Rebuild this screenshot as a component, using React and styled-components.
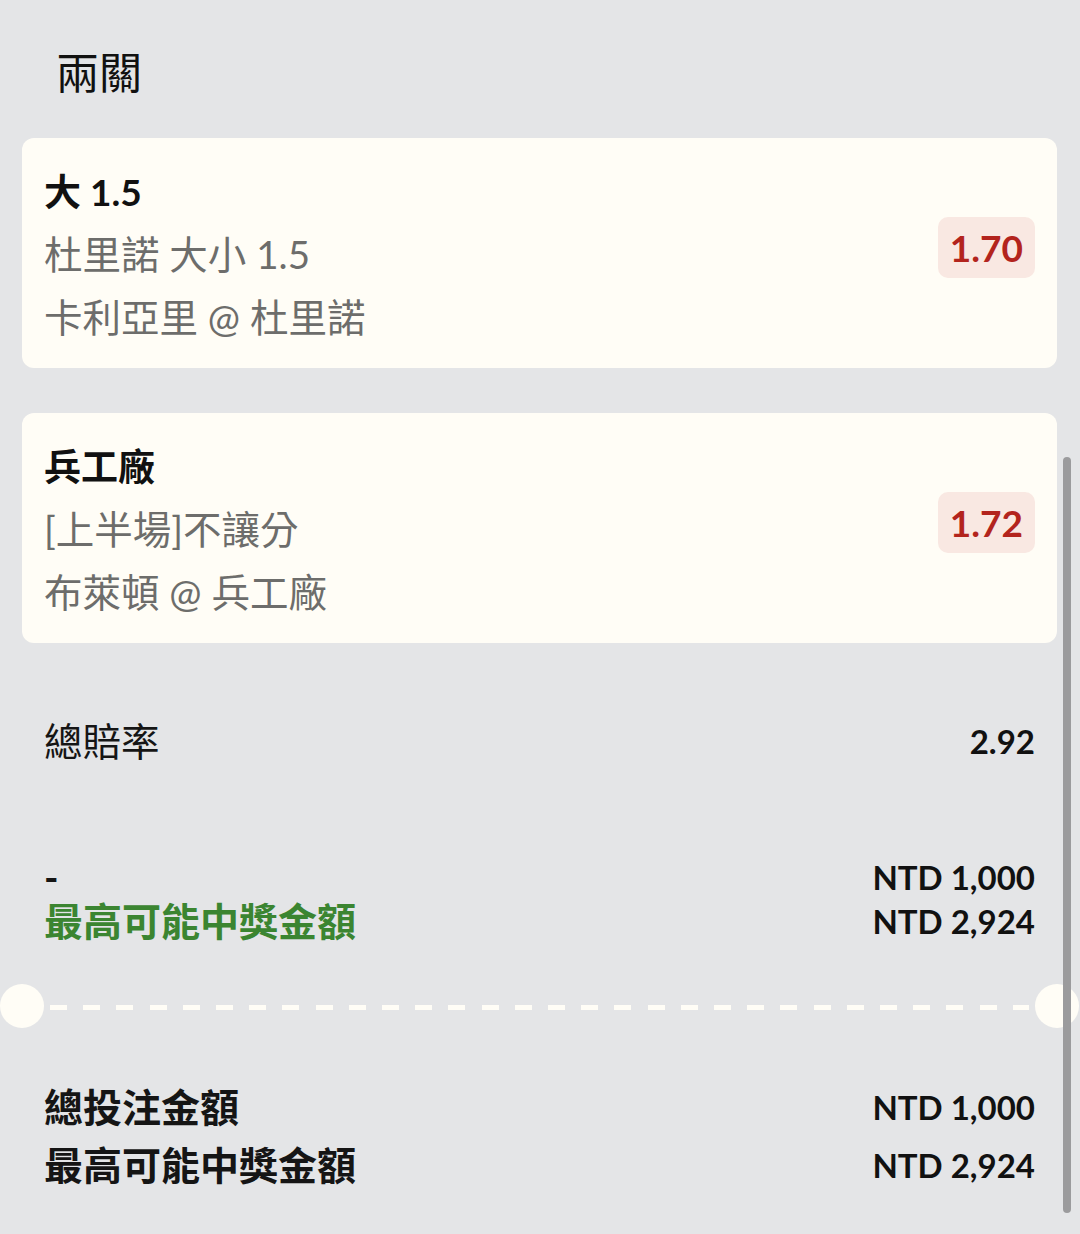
import React from "react";
import styled, { createGlobalStyle } from "styled-components";

const Global = createGlobalStyle`
  html, body {
    margin: 0;
    padding: 0;
    background: #e4e5e7;
  }
  body {
    font-family: Lato, "Noto Sans CJK TC", "Noto Sans", sans-serif;
    color: #111;
  }
`;

const Page = styled.div`
  position: relative;
  min-height: 1234px;
  padding: 0 23px 0 22px;
  box-sizing: border-box;
  display: flex;
  flex-direction: column;
`;

const Title = styled.h1`
  margin: 46px 0 0;
  padding-left: 34px;
  font-size: 43px;
  line-height: 54px;
  font-weight: 400;
  color: #111;
`;

const CardList = styled.div`
  margin-top: 38px;
  display: flex;
  flex-direction: column;
  gap: 45px;
`;

const Card = styled.div`
  height: 230px;
  box-sizing: border-box;
  background: #fffdf6;
  border-radius: 12px;
  padding: 22px 22px 18px 22px;
  display: flex;
  justify-content: space-between;
  align-items: flex-start;
`;

const Lines = styled.div`
  display: flex;
  flex-direction: column;
`;

const Line = styled.div`
  font-size: ${(p) => (p.$strong ? "37px" : "38.5px")};
  line-height: 63px;
  font-weight: ${(p) => (p.$strong ? 700 : 400)};
  color: ${(p) => (p.$strong ? "#111" : "#6d6d6b")};
  white-space: nowrap;
`;

const Odds = styled.div`
  margin-top: 57px;
  background: #f9e8e2;
  color: #b3241d;
  border-radius: 10px;
  height: 61px;
  padding: 0 12px;
  display: flex;
  align-items: center;
  font-size: 37px;
  font-weight: 700;
`;

const Row = styled.div`
  display: flex;
  justify-content: space-between;
  align-items: center;
  padding: 0 22px 0 22px;
  margin-top: ${(p) => p.$top}px;
`;

const Col = styled.div`
  display: flex;
  flex-direction: column;
  align-items: ${(p) => (p.$right ? "flex-end" : "flex-start")};
`;

const Label = styled.div`
  font-size: ${(p) => (p.$bold ? 39 : 38.5)}px;
  line-height: ${(p) => p.$lh || 44}px;
  font-weight: ${(p) => (p.$bold ? 700 : 400)};
  color: ${(p) => p.$color || "#151515"};
  white-space: nowrap;
`;

const Value = styled.div`
  font-size: 33px;
  line-height: ${(p) => p.$lh || 44}px;
  font-weight: 700;
  color: #111;
  white-space: nowrap;
`;

const Divider = styled.div`
  margin: 41px -22px 0;
  height: 44px;
  display: flex;
  align-items: center;
`;

const Notch = styled.div`
  width: 44px;
  height: 44px;
  border-radius: 50%;
  background: #fffdf6;
  flex: none;
`;

const Dashes = styled.div`
  flex: 1;
  height: 5px;
  margin: 3px 6px 0;
  background: repeating-linear-gradient(
    to right,
    #fffdf6 0 17px,
    transparent 17px 33.2px
  );
`;

const Scrollbar = styled.div`
  position: absolute;
  left: 1063px;
  top: 457px;
  width: 8px;
  height: 756px;
  border-radius: 4px;
  background: #9b9b9d;
`;

const legs = [
  { title: "大 1.5", market: "杜里諾 大小 1.5", match: "卡利亞里 @ 杜里諾", odds: "1.70" },
  { title: "兵工廠", market: "[上半場]不讓分", match: "布萊頓 @ 兵工廠", odds: "1.72" },
];

export default function App() {
  return (
    <>
      <Global />
      <Page>
        <Title>兩關</Title>
        <CardList>
          {legs.map((l) => (
            <Card key={l.title}>
              <Lines>
                <Line $strong>{l.title}</Line>
                <Line>{l.market}</Line>
                <Line>{l.match}</Line>
              </Lines>
              <Odds>{l.odds}</Odds>
            </Card>
          ))}
        </CardList>

        <Row $top={76}>
          <Label>總賠率</Label>
          <Value>2.92</Value>
        </Row>

        <Row $top={92}>
          <Col>
            <Label $bold>-</Label>
            <Label $bold $color="#3b8531">最高可能中獎金額</Label>
          </Col>
          <Col $right>
            <Value>NTD 1,000</Value>
            <Value>NTD 2,924</Value>
          </Col>
        </Row>

        <Divider>
          <Notch />
          <Dashes />
          <Notch />
        </Divider>

        <Row $top={50}>
          <Col>
            <Label $bold $lh={58}>總投注金額</Label>
            <Label $bold $lh={58}>最高可能中獎金額</Label>
          </Col>
          <Col $right>
            <Value $lh={58}>NTD 1,000</Value>
            <Value $lh={58}>NTD 2,924</Value>
          </Col>
        </Row>
        <Scrollbar />
      </Page>
    </>
  );
}
